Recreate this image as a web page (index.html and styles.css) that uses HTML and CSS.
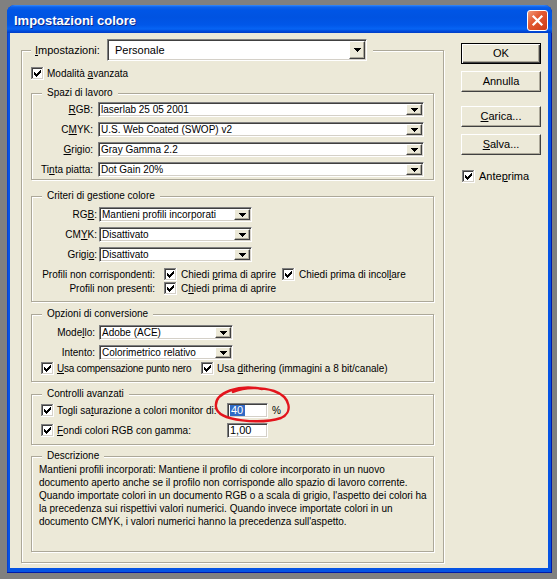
FILE: index.html
```html
<!DOCTYPE html>
<html lang="it">
<head>
<meta charset="utf-8">
<title>Impostazioni colore</title>
<link rel="stylesheet" href="styles.css">
</head>
<body>
<svg class="sprite" aria-hidden="true">
  <symbol id="cb" viewBox="0 0 13 13">
    <path fill="#808080" d="M0 0h12v1H1v11H0z"/>
    <path fill="#404040" d="M1 1h10v1H2v9H1z"/>
    <path fill="#ffffff" d="M12 0h1v13H0v-1h12z"/>
    <path fill="#d4d0c8" d="M11 1h1v11H1v-1h10z"/>
    <rect x="2" y="2" width="9" height="9" fill="#ffffff"/>
    <path fill="#000" d="M3 5h1v3H3zM4 6h1v3H4zM5 7h1v3H5zM6 6h1v3H6zM7 5h1v3H7zM8 4h1v3H8zM9 3h1v3H9z"/>
  </symbol>
  <symbol id="ar" viewBox="0 0 7 4">
    <path fill="#000" d="M0 0h7v1H0zM1 1h5v1H1zM2 2h3v1H2zM3 3h1v1H3z"/>
  </symbol>
</svg>

<div class="window">
  <div class="titlebar">
    <span class="title">Impostazioni colore</span>
    <div class="close">
      <svg width="19" height="19" viewBox="0 0 19 19"><path d="M5.5 5.5L13.5 13.5M13.5 5.5L5.5 13.5" stroke="#fff" stroke-width="2.2" stroke-linecap="square"/></svg>
    </div>
  </div>

  <div class="client">
    <div class="group main">
      <div class="mlegend">
        <span class="mlabel"><u>I</u>mpostazioni:</span>
        <div class="field dd"><span class="val">Personale</span><span class="arr"><svg class="tri"><use href="#ar"/></svg></span></div>
      </div>

      <div class="crow mod"><svg class="cb"><use href="#cb"/></svg><span class="ct">Modalità <u>a</u>vanzata</span></div>

      <div class="group spazi">
        <div class="gt">Spazi di lavoro</div>
        <div class="frow"><span class="lbl"><u>R</u>GB:</span><div class="field sel"><span class="val">laserlab 25 05 2001</span><span class="arr"><svg class="tri"><use href="#ar"/></svg></span></div></div>
        <div class="frow"><span class="lbl">C<u>M</u>YK:</span><div class="field sel"><span class="val">U.S. Web Coated (SWOP) v2</span><span class="arr"><svg class="tri"><use href="#ar"/></svg></span></div></div>
        <div class="frow"><span class="lbl"><u>G</u>rigio:</span><div class="field sel"><span class="val">Gray Gamma 2.2</span><span class="arr"><svg class="tri"><use href="#ar"/></svg></span></div></div>
        <div class="frow"><span class="lbl">Ti<u>n</u>ta piatta:</span><div class="field sel"><span class="val">Dot Gain 20%</span><span class="arr"><svg class="tri"><use href="#ar"/></svg></span></div></div>
      </div>

      <div class="group criteri">
        <div class="gt">Criteri di gestione colore</div>
        <div class="frow"><span class="lbl">RG<u>B</u>:</span><div class="field sel"><span class="val">Mantieni profili incorporati</span><span class="arr"><svg class="tri"><use href="#ar"/></svg></span></div></div>
        <div class="frow"><span class="lbl">CM<u>Y</u>K:</span><div class="field sel"><span class="val">Disattivato</span><span class="arr"><svg class="tri"><use href="#ar"/></svg></span></div></div>
        <div class="frow"><span class="lbl">Grigi<u>o</u>:</span><div class="field sel"><span class="val">Disattivato</span><span class="arr"><svg class="tri"><use href="#ar"/></svg></span></div></div>
        <div class="crow prow">
          <span class="plbl">Profili non corrispondenti:</span>
          <span class="citem first"><svg class="cb"><use href="#cb"/></svg><span class="ct">Chiedi <u>p</u>rima di aprire</span></span>
          <span class="citem"><svg class="cb"><use href="#cb"/></svg><span class="ct">Chiedi prima di incol<u>l</u>are</span></span>
        </div>
        <div class="crow prow">
          <span class="plbl">Profili non presenti:</span>
          <span class="citem first"><svg class="cb"><use href="#cb"/></svg><span class="ct">C<u>h</u>iedi prima di aprire</span></span>
        </div>
      </div>

      <div class="group opzioni">
        <div class="gt">Opzioni di conversione</div>
        <div class="frow"><span class="lbl">Mode<u>l</u>lo:</span><div class="field sel"><span class="val">Adobe (ACE)</span><span class="arr"><svg class="tri"><use href="#ar"/></svg></span></div></div>
        <div class="frow"><span class="lbl">Intento:</span><div class="field sel"><span class="val">Colorimetrico relativo</span><span class="arr"><svg class="tri"><use href="#ar"/></svg></span></div></div>
        <div class="crow orow">
          <span class="citem first"><svg class="cb"><use href="#cb"/></svg><span class="ct tight"><u>U</u>sa compensazione punto nero</span></span>
          <span class="citem"><svg class="cb"><use href="#cb"/></svg><span class="ct">Usa <u>d</u>ithering (immagini a 8 bit/canale)</span></span>
        </div>
      </div>

      <div class="group controlli">
        <div class="gt">Controlli avanzati</div>
        <div class="irow"><svg class="cb"><use href="#cb"/></svg><span class="ilbl">Togli sa<u>t</u>urazione a colori monitor di:</span><div class="field inp"><span class="val"><span class="hl">40</span></span></div><span class="pct">%</span></div>
        <div class="irow"><svg class="cb"><use href="#cb"/></svg><span class="ilbl"><u>F</u>ondi colori RGB con gamma:</span><div class="field inp"><span class="val">1,00</span></div></div>
      </div>

      <div class="group descr">
        <div class="gt">Descrizione</div>
        <p class="desc">Mantieni profili incorporati: Mantiene il profilo di colore incorporato in un nuovo<br>documento aperto anche se il profilo non corrisponde allo spazio di lavoro corrente.<br>Quando importate colori in un documento RGB o a scala di grigio, l'aspetto dei colori ha<br>la precedenza sui rispettivi valori numerici. Quando invece importate colori in un<br>documento CMYK, i valori numerici hanno la precedenza sull'aspetto.</p>
      </div>
    </div>

    <div class="side">
      <div class="btn default">OK</div>
      <div class="btn annulla">Annulla</div>
      <div class="btn carica"><span><u>C</u>arica...</span></div>
      <div class="btn salva"><span><u>S</u>alva...</span></div>
      <div class="crow ante"><svg class="cb"><use href="#cb"/></svg><span class="ct">Ante<u>p</u>rima</span></div>
    </div>
  </div>

  <svg class="mark" width="100" height="60" viewBox="0 0 100 60" aria-hidden="true">
    <path d="M55 9 C33 4, 7 12, 9 27 C11 42, 55 44, 74 38 C86 33, 84 17, 67 11 C55 7, 38 7, 26 12" fill="none" stroke="#e3141c" stroke-width="2.4" stroke-linecap="round"/>
  </svg>
</div>
</body>
</html>
```

FILE: styles.css
```css
* { box-sizing: border-box; }
html, body { margin: 0; padding: 0; }
body {
  background: #808080;
  font-family: "Liberation Sans", Arial, sans-serif;
  font-size: 10px;
  color: #000;
  width: 557px;
  height: 579px;
  overflow: hidden;
}
.sprite { display: block; width: 0; height: 0; overflow: hidden; }
u { text-decoration: underline; text-underline-offset: 1px; }

/* window frame */
.window {
  position: relative;
  margin: 5px 0 0 7px;
  width: 545px;
  height: 568px;
  background: #0553e3;
  border-radius: 8px 8px 0 0;
  box-shadow: inset -1px -1px 0 #0019a8, inset 1px 0 0 #0a3fd0;
  padding-bottom: 5px;
  display: flex;
  flex-direction: column;
}
.titlebar {
  flex: none;
  height: 28px;
  border-radius: 8px 8px 0 0;
  background: linear-gradient(to bottom, #3a8bf7 0, #0b61ec 2px, #0056e6 5px, #0053e1 12px, #0057e9 20px, #0664f4 24px, #004bdc 26px, #003dc6 28px);
  display: flex;
  justify-content: space-between;
  align-items: flex-start;
  padding: 0 4px 0 7px;
}
.title {
  margin-top: 8px;
  font: bold 13px/15px "Liberation Sans", Arial, sans-serif;
  color: #fff;
  text-shadow: 1px 1px 0 #0c2a8c;
}
.close {
  margin-top: 5px;
  width: 21px;
  height: 21px;
  border: 1px solid #fff;
  border-radius: 3px;
  background: linear-gradient(135deg, #f29a78 0%, #e35a33 40%, #cc3b16 100%);
  display: flex;
  align-items: center;
  justify-content: center;
}
.close svg { display: block; }

.client {
  flex: 1;
  margin: 0 4px 0 3px;
  background: #ece9d8;
  display: flex;
  align-items: flex-start;
  padding-left: 11px;
}

/* group boxes */
.group {
  border: 1px solid #aca899;
  box-shadow: inset 1px 1px 0 #fff, 1px 1px 0 #fff;
}
.gt {
  width: fit-content;
  height: 12px;
  line-height: 12px;
  margin: -7px 0 0 10px;
  padding: 0 5px;
  background: #ece9d8;
  white-space: nowrap;
}
.main {
  width: 423px;
  height: 513px;
  margin-top: 17px;
  padding: 0 9px;
}
.mlegend {
  display: flex;
  align-items: center;
  width: fit-content;
  height: 22px;
  margin-top: -12px;
  padding: 0 6px 0 4px;
  background: #ece9d8;
  font-size: 11px;
}
.mlabel { width: 72px; }

/* fields */
.field {
  display: flex;
  align-items: stretch;
  background: #fff;
  border: 1px solid;
  border-color: #808080 #fff #fff #808080;
  box-shadow: inset 1px 1px 0 #404040, inset -1px -1px 0 #d4d0c8;
  padding: 1px;
}
.val {
  flex: 1;
  padding-left: 1px;
  line-height: 11px;
  white-space: nowrap;
  overflow: hidden;
}
.arr {
  flex: none;
  width: 16px;
  background: #ece9d8;
  border: 1px solid;
  border-color: #fff #404040 #404040 #fff;
  box-shadow: inset -1px -1px 0 #aca899;
  display: flex;
  align-items: center;
  justify-content: center;
}
.tri { display: block; width: 7px; height: 4px; }
.dd { width: 260px; height: 22px; }
.dd .val { padding-left: 6px; line-height: 18px; font-size: 11px; }
.sel { height: 15px; }

.frow { display: flex; align-items: center; height: 15px; margin-top: 5px; }
.lbl { text-align: right; white-space: nowrap; line-height: 15px; }

/* checkboxes */
.cb { display: block; flex: none; width: 13px; height: 13px; }
.crow { display: flex; align-items: center; height: 13px; }
.ct { margin-left: 3px; white-space: nowrap; line-height: 13px; }
.tight { letter-spacing: -0.25px; }
.citem { display: flex; align-items: center; }

.mod { margin-top: 6px; }

/* Spazi di lavoro */
.spazi { height: 87px; margin-top: 13px; }
.spazi .frow:nth-of-type(2) { margin-top: 3px; }
.spazi .lbl { width: 61px; margin-right: 5px; }
.spazi .sel { width: 326px; }

/* Criteri */
.criteri { height: 106px; margin-top: 16px; }
.criteri .lbl { width: 65px; margin-right: 2px; }
.criteri .sel { width: 153px; }
.prow { margin-top: 1px; }
.criteri .frow + .prow { margin-top: 6px; }
.plbl { width: 123px; margin-right: 9px; text-align: right; white-space: nowrap; }
.prow .ct { margin-left: 4px; }
.prow .citem.first { width: 118px; }

/* Opzioni */
.opzioni { height: 68px; margin-top: 12px; }
.opzioni .lbl { width: 63px; margin-right: 4px; }
.opzioni .sel { width: 134px; }
.orow { margin-top: 2px; padding-left: 9px; }
.orow .citem.first { width: 160px; }

/* Controlli avanzati */
.controlli { height: 51px; margin-top: 12px; }
.irow { display: flex; align-items: center; height: 15px; margin-top: 5px; padding-left: 9px; }
.controlli .irow:nth-of-type(2) { margin-top: 3px; }
.ilbl { width: 173px; padding-left: 3px; white-space: nowrap; }
.inp { width: 41px; height: 15px; }
.inp .val { font-size: 11px; padding-left: 1px; }
.hl { background: #316ac5; color: #fff; padding: 0 2px 0 1px; }
.pct { margin-left: 4px; }

/* Descrizione */
.descr { height: 96px; margin-top: 11px; }
.desc {
  margin: 1px 0 0;
  padding-left: 7px;
  line-height: 13px;
  white-space: nowrap;
}

/* right column */
.side {
  width: 80px;
  margin: 10px 0 0 17px;
  display: flex;
  flex-direction: column;
}
.btn {
  height: 21px;
  background: #ece9d8;
  border: 1px solid;
  border-color: #fff #404040 #404040 #fff;
  box-shadow: inset -1px -1px 0 #aca899;
  display: flex;
  align-items: center;
  justify-content: center;
  font-size: 11px;
  line-height: 13px;
}
.btn.default {
  border-color: #000;
  box-shadow: inset 1px 1px 0 #fff, inset -1px -1px 0 #404040, inset -2px -2px 0 #aca899;
}
.annulla { margin-top: 7px; }
.carica { margin-top: 14px; }
.salva { margin-top: 7px; }
.ante { margin-top: 15px; padding-left: 1px; font-size: 11px; }
.ante .ct { margin-left: 4px; }

/* hand-drawn annotation overlay */
.mark {
  position: absolute;
  left: 200px;
  top: 375px;
  pointer-events: none;
}
```
